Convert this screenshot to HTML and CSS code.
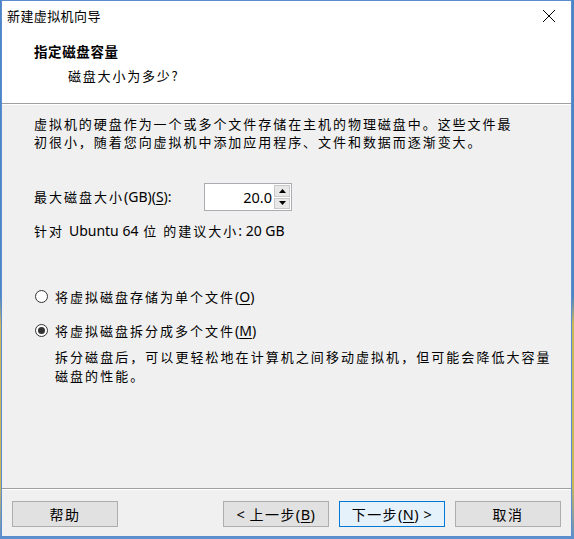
FILE: index.html
```html
<!DOCTYPE html>
<html lang="zh-CN">
<head>
<meta charset="utf-8">
<title>新建虚拟机向导</title>
<link rel="stylesheet" href="styles.css">
</head>
<body>
<div class="window">
  <div class="titlebar">
    <span class="title">新建虚拟机向导</span>
    <svg class="close" width="14" height="14" viewBox="0 0 14 14"><path d="M1 1 L13 13 M13 1 L1 13" stroke="#000" stroke-width="1" fill="none"/></svg>
  </div>
  <div class="header">
    <div class="h-title">指定磁盘容量</div>
    <div class="h-sub">磁盘大小为多少?</div>
  </div>
  <div class="content">
    <p class="para">虚拟机的硬盘作为一个或多个文件存储在主机的物理磁盘中。这些文件最<br>初很小，随着您向虚拟机中添加应用程序、文件和数据而逐渐变大。</p>
    <div class="spin-row">
      <span class="label">最大磁盘大小<span class="lat">(GB)(<u>S</u>):</span></span>
      <div class="spin">
        <span class="spin-val">20.0</span>
        <div class="spin-btns">
          <div class="spin-btn"><svg width="7" height="4" viewBox="0 0 7 4"><path d="M0 4 L3.5 0 L7 4 Z" fill="#000"/></svg></div>
          <div class="spin-btn"><svg width="7" height="4" viewBox="0 0 7 4"><path d="M0 0 L3.5 4 L7 0 Z" fill="#000"/></svg></div>
        </div>
      </div>
    </div>
    <p class="suggest">针对 <span class="lat">Ubuntu 64</span> 位 的建议大小<span class="lat">: 20 GB</span></p>
    <div class="radio-row first">
      <span class="radio"></span>
      <span>将虚拟磁盘存储为单个文件<span class="lat">(<u>O</u>)</span></span>
    </div>
    <div class="radio-row second">
      <span class="radio checked"></span>
      <span>将虚拟磁盘拆分成多个文件<span class="lat">(<u>M</u>)</span></span>
    </div>
    <p class="desc">拆分磁盘后，可以更轻松地在计算机之间移动虚拟机，但可能会降低大容量<br>磁盘的性能。</p>
  </div>
  <div class="footer">
    <button class="btn">帮助</button>
    <div class="btn-group">
      <button class="btn"><span class="lat">&lt; </span>上一步<span class="lat">(<u>B</u>)</span></button>
      <button class="btn primary">下一步<span class="lat">(<u>N</u>) &gt;</span></button>
      <button class="btn">取消</button>
    </div>
  </div>
</div>
</body>
</html>
```
FILE: styles.css
```css
* { box-sizing: border-box; }
html, body {
  margin: 0;
  padding: 0;
  width: 574px;
  height: 539px;
  overflow: hidden;
  background: linear-gradient(180deg, #4d86c6 0%, #4d86c6 55%, #c9b75a 60%, #c9b75a 90%, #5b8fcf 100%);
  font-family: "Noto Sans CJK SC", "Noto Sans", sans-serif;
  font-size: 13px;
  color: #000;
}
.lat {
  font-family: "Noto Sans", "Noto Sans CJK SC", sans-serif;
  font-size: 14px;
  letter-spacing: 0;
}
u { text-underline-offset: 2px; }
.window {
  margin-left: 1px;
  width: 571px;
  height: 537px;
  border: 1px solid #5b8cd0;
  background: #f0f0f0;
  display: flex;
  flex-direction: column;
}
.titlebar {
  height: 30px;
  flex: none;
  background: #fff;
  display: flex;
  align-items: center;
  justify-content: space-between;
  padding: 0 15px 0 5px;
}
.title {
  font-size: 13px;
  line-height: 30px;
  letter-spacing: 0.4px;
}
.close { display: block; margin-top: -1px; }
.header {
  height: 73px;
  flex: none;
  background: #fff;
  padding: 11px 0 0 32px;
  border-bottom: 1px solid #a0a0a0;
  box-shadow: 0 1px 0 #ffffff;
}
.h-title {
  font-weight: bold;
  font-size: 13.5px;
  line-height: 18px;
  letter-spacing: 0.6px;
}
.h-sub {
  margin: 7px 0 0 34px;
  line-height: 18px;
  letter-spacing: 1.8px;
}
.content {
  flex: 1;
  margin-top: 1px;
  padding: 10px 0 0 32px;
  border-bottom: 1px solid #a0a0a0;
  letter-spacing: 2px;
}
p { margin: 0; }
.para { line-height: 18px; letter-spacing: 1.95px; }
.spin-row {
  margin-top: 32px;
  display: flex;
  align-items: center;
  height: 28px;
}
.label { width: 170px; line-height: 18px; }
.spin {
  width: 88px;
  height: 28px;
  background: #fff;
  border: 1px solid #abadb3;
  display: flex;
  align-items: stretch;
}
.spin-val {
  flex: 1;
  text-align: right;
  padding-right: 2px;
  line-height: 26px;
  font-family: "Noto Sans", sans-serif;
  font-size: 14.5px;
  letter-spacing: 0;
}
.spin-btns {
  width: 17px;
  display: flex;
  flex-direction: column;
  padding: 1px 1px 1px 0;
  gap: 1px;
}
.spin-btn {
  flex: 1;
  background: #e8e8e8;
  border: 1px solid #c8c8c8;
  display: flex;
  align-items: center;
  justify-content: center;
}
.spin-btn svg { display: block; }
.suggest {
  margin-top: 11px;
  line-height: 18px;
}
.radio-row {
  display: flex;
  align-items: center;
  height: 18px;
  gap: 7px;
  margin-left: 1px;
}
.radio-row.first { margin-top: 47px; }
.radio-row.second { margin-top: 16px; }
.radio {
  width: 13px;
  height: 13px;
  flex: none;
  border: 1px solid #333;
  border-radius: 50%;
  background: #fff;
  display: flex;
  align-items: center;
  justify-content: center;
}
.radio.checked::after {
  content: "";
  width: 7px;
  height: 7px;
  border-radius: 50%;
  background: #333;
}
.desc {
  margin: 8px 0 0 21px;
  line-height: 19px;
  letter-spacing: 2.05px;
}
.footer {
  height: 47px;
  flex: none;
  padding: 11px 10px 0 10px;
  display: flex;
  justify-content: space-between;
  align-items: flex-start;
  border-top: 1px solid #fff;
}
.btn-group { display: flex; gap: 10px; }
.btn {
  width: 106px;
  height: 26px;
  margin: 0;
  padding: 0;
  background: #e1e1e1;
  border: 1px solid #adadad;
  font-family: "Noto Sans CJK SC", "Noto Sans", sans-serif;
  font-size: 14px;
  letter-spacing: 1.4px;
  color: #000;
  line-height: 22px;
}
.btn .lat { font-size: 14.5px; letter-spacing: 0.5px; }
.btn.primary {
  background: #e5f1fb;
  border-color: #0078d7;
}
```
